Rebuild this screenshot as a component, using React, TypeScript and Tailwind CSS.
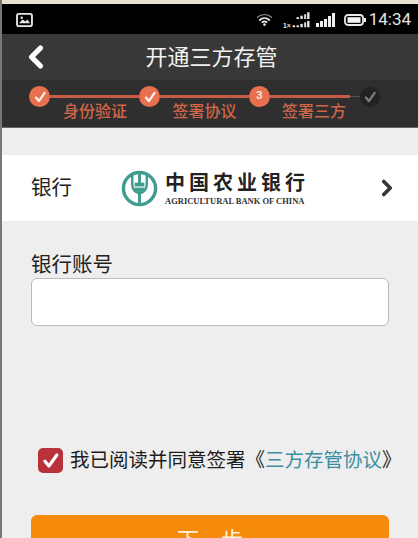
import { ChevronLeft, ChevronRight } from "lucide-react";

const cjk = "font-['Roboto','Noto_Sans_CJK_SC',sans-serif]";

function Tick({ className }: { className: string }) {
  return (
    <svg viewBox="0 0 24 24" className={className} fill="none" stroke="currentColor" strokeWidth="4" strokeLinecap="round" strokeLinejoin="round">
      <path d="M5 13l5 6L20 5" />
    </svg>
  );
}

function StepDot({ num, muted }: { num?: number; muted?: boolean }) {
  if (muted) {
    return (
      <div className="flex h-[20px] w-[20px] shrink-0 items-center justify-center rounded-full bg-[#222]">
        <Tick className="h-[14px] w-[14px] text-[#7c7c7c]" />
      </div>
    );
  }
  return (
    <div className="flex h-[21px] w-[21px] shrink-0 items-center justify-center rounded-full bg-[#e8704f] text-[11px] font-bold text-[#f8e6dc]">
      {num ?? <Tick className="h-[14px] w-[14px] text-[#fbeee6]" />}
    </div>
  );
}

function StatusBar() {
  return (
    <div className="flex h-[30px] items-center justify-between bg-black pl-[14px] pr-[7px] pt-[1px]">
      <svg viewBox="0 0 18 15" className="h-[14px] w-[17px]">
        <rect x="1" y="1" width="16" height="13" rx="2" fill="none" stroke="#e8e8e8" strokeWidth="2" />
        <path d="M3 11l4-4 3 2 2-2 3 4z" fill="#e8e8e8" />
        <circle cx="6" cy="5" r="1.3" fill="#e8e8e8" />
      </svg>
      <div className="flex items-center">
        <svg viewBox="0 0 20 16" className="mr-[10px] h-[15px] w-[17px]" fill="none" stroke="#eeeeee" strokeLinecap="round">
          <path d="M1.5 5.5C6.5 1 13.5 1 18.5 5.5" strokeWidth="1.4" stroke="#9a9a9a" />
          <path d="M4.5 8.5c3.200-2.800 7.800-2.800 11 0" strokeWidth="2.200" />
          <path d="M7.500 11.200c1.500-1.200 3.500-1.200 5 0" strokeWidth="2" />
          <circle cx="10" cy="14" r="1.500" fill="#eeeeee" stroke="none" />
        </svg>
        <svg viewBox="0 0 28 18" className="mr-[6px] h-[18px] w-[27px]" fill="#e6e6e6">
          <text x="0" y="17" fontSize="7" fontWeight="700" fontFamily="Liberation Sans">1×</text>
          <rect x="10" y="14.500" width="2.500" height="2" />
          <rect x="14" y="14.500" width="2.500" height="2" />
          <rect x="18" y="13" width="2.500" height="3.500" />
          <rect x="22" y="11.500" width="2" height="5" />
          <rect x="25" y="10" width="2.500" height="6.500" />
          <rect x="14" y="6" width="2.500" height="2" />
          <rect x="18" y="4.500" width="2.500" height="3.500" />
          <rect x="22" y="3" width="2" height="5" />
          <rect x="25" y="1" width="2.500" height="7" />
        </svg>
        <svg viewBox="0 0 20 14" className="mr-[8px] h-[14px] w-[20px]" fill="#eeeeee">
          <rect x="0" y="10" width="3" height="4" />
          <rect x="4" y="8" width="3" height="6" />
          <rect x="8" y="6" width="3" height="8" />
          <rect x="12" y="3" width="3" height="11" />
          <rect x="16" y="0" width="3" height="14" />
        </svg>
        <svg viewBox="0 0 22 12" className="h-[12px] w-[22px]">
          <rect x="1" y="1" width="18" height="10" rx="3" fill="none" stroke="#e8e8e8" strokeWidth="1.800" />
          <rect x="3.500" y="3.200" width="13" height="5.600" fill="#f2f2f2" />
          <rect x="20" y="4" width="2" height="4" fill="#e8e8e8" />
        </svg>
        <span className="ml-[3px] font-['Roboto',sans-serif] text-[17px] leading-none text-[#e4e4e4]">14:34</span>
      </div>
    </div>
  );
}

function Stepper() {
  const labels = ["身份验证", "签署协议", "签署三方"];
  return (
    <div className="flex h-[47px] flex-col bg-[#2f2f2f] pl-[27px] pr-[38px] pt-[6px]">
      <div className="flex items-center">
        <StepDot />
        <div className="h-[3px] w-[89px] shrink-0 bg-[#c65c45]" />
        <StepDot />
        <div className="h-[3px] w-[89px] shrink-0 bg-[#c65c45]" />
        <StepDot num={3} />
        <div className="h-[3px] w-[80px] shrink-0 bg-[#c65c45]" />
        <div className="h-[1px] flex-1 bg-[#555]" />
        <StepDot muted />
      </div>
      <div className="-mt-[6px] flex pl-[34px]">
        {labels.map((l) => (
          <span key={l} className="w-[109.5px] shrink-0 text-[16px] font-medium leading-[22px] text-[#cf6549]">
            {l}
          </span>
        ))}
      </div>
    </div>
  );
}

function BankLogo() {
  return (
    <div className="flex items-center">
      <svg viewBox="0 0 38 38" className="h-[37px] w-[37px]" fill="none" stroke="#3f9c8e">
        <circle cx="19" cy="19" r="16.500" strokeWidth="3.500" />
        <path d="M19 1v36" strokeWidth="3" />
        <path d="M11.500 3v11c0 6 3.500 9 7.500 10 4-1 7.500-4 7.500-10V3" strokeWidth="2.500" />
        <path d="M14 13h10v9H14z" fill="#3f9c8e" stroke="none" />
        <path d="M14 17.500h10" stroke="#ffffff" strokeWidth="1.200" />
      </svg>
      <div className="ml-[7px] flex flex-col">
        <span className="font-['Noto_Sans_CJK_SC',serif] text-[20px] font-bold leading-[24px] tracking-[4px] text-[#222]">中国农业银行</span>
        <span className="mt-[2px] font-['Liberation_Serif',serif] text-[8.500px] font-bold leading-[10px] text-[#333]">AGRICULTURAL BANK OF CHINA</span>
      </div>
    </div>
  );
}

export default function App() {
  return (
    <div className={`h-[538px] w-[418px] overflow-hidden border-l-2 border-[#777] bg-[#eeeeee] ${cjk}`}>
      <div className="h-[4px] bg-[#e6e2d2]" />
      <StatusBar />
      <div className="relative flex h-[46px] items-center justify-center bg-[#383838] pl-[3px]">
        <ChevronLeft className="absolute left-[16px] top-[5px] h-[36px] w-[36px] text-white" strokeWidth={3.500} />
        <h1 className="text-[22px] font-normal text-[#f2f2f2]">开通三方存管</h1>
      </div>
      <Stepper />
      <div className="h-[1px] bg-[#666]" />

      <div className="mt-[27px] flex h-[66px] items-center bg-white pl-[29px] pr-[18px]">
        <span className="w-[90px] text-[20.500px] text-[#222]">银行</span>
        <BankLogo />
        <ChevronRight className="ml-auto h-[26px] w-[26px] text-[#3a3a3a]" strokeWidth={3.500} />
      </div>

      <div className="px-[29px] pt-[31px]">
        <label className="block text-[20.500px] leading-[26px] text-[#222]">银行账号</label>
        <input className="block h-[48px] w-[358px] rounded-[6px] border border-[#bbbbbb] bg-white" />
      </div>

      <div className="mt-[120px] flex items-center pl-[36px]">
        <div className="flex h-[25px] w-[25px] items-center justify-center rounded-[5px] bg-[#b8323a]">
          <Tick className="h-[19px] w-[19px] text-white" />
        </div>
        <span className="ml-[7px] whitespace-nowrap text-[19.500px] text-[#1c1c1c]">
          我已阅读并同意签署《<span className="text-[#3c8ea0]">三方存管协议</span>》
        </span>
      </div>

      <button className="ml-[29px] mt-[40px] block h-[50px] w-[358px] rounded-[6px] bg-[#f68a0a] text-[22px] text-[#fdf3dc]">下一步</button>
    </div>
  );
}
